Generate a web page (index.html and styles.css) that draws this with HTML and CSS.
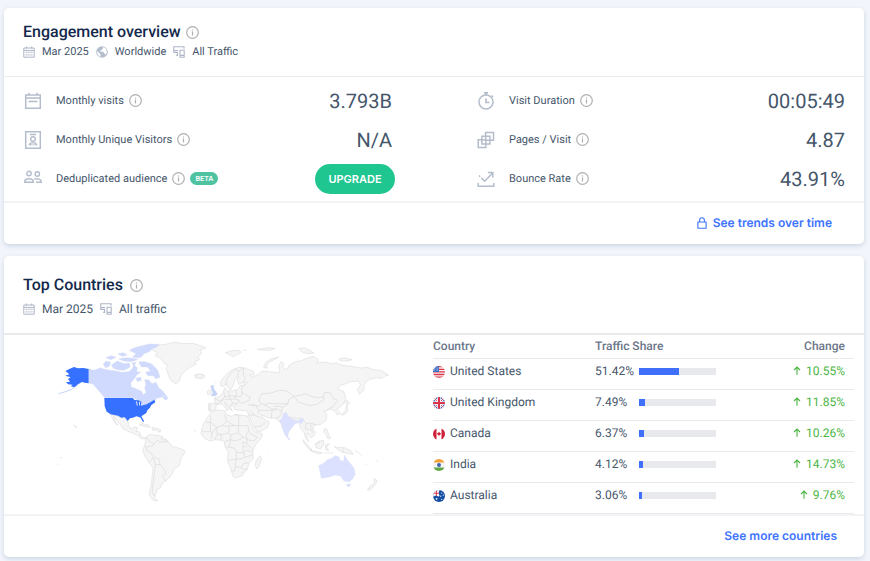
FILE: index.html
```html
<!DOCTYPE html>
<html lang="en">
<head>
<meta charset="utf-8">
<title>Engagement overview</title>
<link rel="stylesheet" href="styles.css">
</head>
<body>
<svg class="sprite" aria-hidden="true">
  <symbol id="info" viewBox="0 0 13 13"><circle cx="6.5" cy="6.5" r="5.8" fill="none" stroke="#b0b0b4" stroke-width="1.2"/><path d="M6.5 5.6v3.9M6.5 3.4v1.2" stroke="#b0b0b4" stroke-width="1.2"/></symbol>
  <symbol id="cal" viewBox="0 0 12 12"><path d="M.8 2h10.4v9.200H.8zM.8 4.400h10.400M3.300 .5v2M8.700 .5v2" fill="none" stroke="#adb6c6" stroke-width="1"/><path d="M2.600 6.400h7M2.600 8.800h7" stroke="#adb6c6" stroke-width="1.200" stroke-dasharray="1.200 .7"/></symbol>
  <symbol id="globe" viewBox="0 0 12 12"><circle cx="6" cy="6" r="5.8" fill="#b4bdcc"/><path d="M1.1 5.1 4.6 8.6v2.2C2.3 10.300 .8 7.500 1.100 5.100zM7 1.200v1.200L5.700 3.300v1.200H4.300v1.300h3.400v1.700h1.200l.8 1.400c1.600-1.900 1.600-5.500-.8-7.100z" fill="#fff"/></symbol>
  <symbol id="devices" viewBox="0 0 12 12"><path d="M11 2.800V.8H.8V6.400H5M3.200 9.400H5M4.500 6.400v3M.8 4.500H5M7 4.300h4.200v7H7zM7 9.400h4.200" fill="none" stroke="#adb6c6" stroke-width="1.100"/></symbol>
  <symbol id="visits" viewBox="0 0 18 18"><path d="M1.700 3h14.600v13.300H1.700zM1.700 6h14.600M5 .8v2.200M13 .8v2.200M4.500 9.500h9" fill="none" stroke="#b4bdcc" stroke-width="1.500"/></symbol>
  <symbol id="person" viewBox="0 0 18 18"><path d="M1.700 .8h14.600v16.400H1.700zM6 3.500h6" fill="none" stroke="#b4bdcc" stroke-width="1.500"/><circle cx="9" cy="8" r="2.300" fill="none" stroke="#b4bdcc" stroke-width="1.400"/><path d="M4.500 14.300c.3-2.600 2-3 4.500-3s4.200.4 4.500 3z" fill="#b4bdcc"/><path d="M7 13h4" stroke="#fff"/></symbol>
  <symbol id="people" viewBox="0 0 18 18"><g fill="none" stroke="#b4bdcc" stroke-width="1.400"><circle cx="5" cy="3.500" r="2.200"/><circle cx="13.300" cy="4" r="2.200"/><path d="M.6 12.300c0-2.500 1.700-3.600 4.400-3.600s4.400 1.100 4.400 3.600zM10.200 9.200c3.500-1 7.200-.1 7.200 3.100H12"/></g></symbol>
  <symbol id="timer" viewBox="0 0 18 18"><circle cx="9" cy="10" r="7" fill="none" stroke="#b4bdcc" stroke-width="1.500"/><path d="M7 .9h4M9 1v2M14.500 3.500l1.500 1.500M9 6.500v4h3.500" fill="none" stroke="#b4bdcc" stroke-width="1.700"/></symbol>
  <symbol id="pages" viewBox="0 0 18 18"><path d="M1.200 8.800h7.600v7.600H1.200zM4.900 5.200h8v7.800h-8zM8.600 1.500h7.900v7.800H8.600z" fill="none" stroke="#b4bdcc" stroke-width="1.500"/></symbol>
  <symbol id="bounce" viewBox="0 0 18 18"><path d="M1.200 13v3.300h15.600V13M2 5.500l1.200 1.200M4.400 7.900l3.300 3.300 7.600-8M10.800 2.500h5v5" fill="none" stroke="#b4bdcc" stroke-width="1.500"/></symbol>
  <symbol id="up" viewBox="0 0 8 9"><path d="M4 8.800V1M1 4l3-3 3 3" fill="none" stroke="#4bb543" stroke-width="1.100"/></symbol>
  <clipPath id="disc"><circle cx="6" cy="6" r="6"/></clipPath>
</svg>

<main class="page">
  <section class="card">
    <header class="card-head">
      <h2 class="title">Engagement overview <svg class="info"><use href="#info"/></svg></h2>
      <p class="meta small"><svg><use href="#cal"/></svg><span>Mar 2025</span><svg><use href="#globe"/></svg><span>Worldwide</span><svg><use href="#devices"/></svg><span>All Traffic</span></p>
    </header>
    <div class="metrics">
      <div class="metric"><svg class="icon"><use href="#visits"/></svg><span>Monthly visits</span><svg class="info"><use href="#info"/></svg><strong class="value">3.793B</strong></div>
      <div class="metric"><svg class="icon"><use href="#timer"/></svg><span>Visit Duration</span><svg class="info"><use href="#info"/></svg><strong class="value">00:05:49</strong></div>
      <div class="metric"><svg class="icon"><use href="#person"/></svg><span>Monthly Unique Visitors</span><svg class="info"><use href="#info"/></svg><strong class="value">N/A</strong></div>
      <div class="metric"><svg class="icon"><use href="#pages"/></svg><span>Pages / Visit</span><svg class="info"><use href="#info"/></svg><strong class="value">4.87</strong></div>
      <div class="metric"><svg class="icon"><use href="#people"/></svg><span>Deduplicated audience</span><svg class="info"><use href="#info"/></svg><span class="beta">BETA</span><button class="upgrade" type="button">UPGRADE</button></div>
      <div class="metric"><svg class="icon"><use href="#bounce"/></svg><span>Bounce Rate</span><svg class="info"><use href="#info"/></svg><strong class="value">43.91%</strong></div>
    </div>
    <footer class="card-foot wide">
      <a class="link" href="#trends"><svg class="lock" viewBox="0 0 10 12"><path d="M.9 5h8.200v6.200H.9zM2.600 5V3.200C2.600 0 7.400 0 7.400 3.200V5" fill="none" stroke="#3e74fe" stroke-width="1.100"/></svg>See trends over time</a>
    </footer>
  </section>

  <section class="card">
    <header class="card-head tall">
      <h2 class="title spaced">Top Countries <svg class="info"><use href="#info"/></svg></h2>
      <p class="meta"><svg><use href="#cal"/></svg><span>Mar 2025</span><svg><use href="#devices"/></svg><span>All traffic</span></p>
    </header>
    <div class="countries">
      <svg class="map" viewBox="0 0 1080 525" role="img" aria-label="World map">
        <g class="land">
          <path d="M332 42 342 36 360 30 378 28 400 22 430 26 460 25 498 38 480 46 484 56 474 66 478 74 465 80 468 88 455 94 440 103 432 112 424 118 418 138 408 146 396 140 388 128 382 110 378 98 384 90 372 84 362 70 346 62 352 52z"/>
          <path d="M463 121 475 118 490 119 494 124 484 130 468 129z"/>
          <path d="M212 238 225 241 240 247 252 250 264 258 266 275 276 282 282 276 292 278 288 288 300 292 302 303 314 309 322 306 318 312 304 311 294 302 280 295 262 288 248 280 240 268 230 256 221 244 226 262 234 270 228 268 219 254z"/>
          <path d="M298 270 310 266 325 272 332 277 318 275zM336 278 350 280 362 284 360 292 350 286 338 286z"/>
          <path d="M320 305 328 298 340 300 362 302 370 310 382 316 390 326 396 334 412 338 433 346 435 352 424 368 418 392 402 402 396 418 386 430 376 438 366 446 362 458 350 464 348 476 343 484 347 494 354 497 340 496 330 484 328 470 334 450 337 420 339 398 326 382 314 362 308 346 314 332z"/>
          <path d="M101 271l8 4 2 4zM88 315l3 1M60 368l6 1M53 388l4-1M461 285l5 3M322 266l4 4"/>
          <g transform="translate(420)">
            <path d="M122 152 122 140 130 128 142 115 158 104 176 97 190 98 206 103 220 108 222 119 208 120 214 127 234 119 246 108 268 110 290 113 300 110 296 92 304 80 312 86 308 98 320 105 328 90 346 80 364 77 378 71 400 64 416 75 410 84 436 81 454 86 470 84 486 91 512 94 540 99 562 97 580 104 604 107 626 120 612 124 606 130 590 128 572 132 558 140 552 150 552 165 538 178 532 164 542 150 534 138 512 140 492 148 478 152 474 164 490 168 497 186 491 206 478 218 470 222 482 236 472 240 463 226 450 222 440 228 432 228 440 238 438 256 422 268 407 270 396 280 407 292 400 304 392 308 382 294 380 302 386 320 376 308 372 292 364 284 356 262 345 264 325 290 322 308 314 296 303 265 295 256 286 250 262 248 244 238 250 250 268 262 262 278 240 290 230 288 216 264 205 240 203 228 180 226 164 224 160 210 150 213 157 228 148 222 146 212 134 202 144 220 142 228 130 210 120 206 108 210 108 222 98 230 85 226 86 206 105 206 103 190 117 184 130 172 134 158 142 168 160 167 176 162 180 152 194 150 204 142 190 142 176 148 172 136 176 122 164 136 160 152 152 164 144 158 140 146 130 154z"/>
            <path d="M82 168 90 164 95 170 92 178 82 178z"/>
            <path d="M45 121 58 117 74 122 70 129 52 129z"/>
            <path d="M136 53 152 48 176 45 184 52 172 58 160 65 148 58zM190 47 200 45M232 43 254 40 266 38 286 40 270 46 240 45zM356 42 372 38 390 46 402 54 384 56 368 52zM476 72 496 69 516 74 502 78 482 77zM250 96 258 82 272 72 296 66 286 72 270 80 260 90 262 100z"/>
            <path d="M95 228 115 225 135 227 138 238 156 244 166 238 202 243 210 262 224 290 246 296 246 306 226 330 218 350 220 370 207 384 202 402 186 422 166 429 159 424 152 400 142 378 145 352 135 335 133 320 124 316 106 314 90 318 76 312 63 296 67 276 76 256 88 240z"/>
            <path d="M228 378 240 362 245 370 238 394 230 402 226 392z"/>
            <path d="M368 314 382 328 396 345 388 344 374 328zM390 346 412 350 428 354 412 356zM405 328 418 318 430 316 432 326 422 342 408 338zM436 330 448 326 440 336 446 348 437 344zM434 280 442 284 446 300 452 308 444 312 438 298 432 292zM462 334 474 338 490 337 514 348 520 358 506 356 488 352 474 344zM524 346 540 356 546 362M556 386l4 4M588 376l6 3M434 354 460 354"/>
            <path d="M484 238 496 230 498 218 502 206 494 202 500 194 508 204 501 212 504 226 496 236 488 242z"/>
            <path d="M582 430 592 438 586 448 572 464 562 465 570 454 584 444zM42 286l5 3M265 356l3 2"/>
          </g>
        </g>
        <g class="borders">
          <path d="M320 305 328 320 344 326 352 316 362 322 384 320M344 326 334 334 318 336 314 332M318 336 320 348 332 352 342 372 346 390 360 388 370 400 378 414 366 424 378 438M326 382 339 370 342 372M346 390 344 410 340 440 336 470 344 484M366 302 366 318M376 312 374 320M360 388 358 374 344 366"/>
          <g transform="translate(420)">
            <path d="M138 152 140 132 150 118 166 104 178 108 190 98M172 122 176 108M190 98 190 120 196 130 190 142 194 150 184 160 186 172 198 180 210 186 208 196 186 205M132 172 134 186 120 204M134 186 148 182 146 170M148 182 164 184 170 176 168 166M148 182 150 192 134 194M150 192 166 192 178 196 182 206M166 192 164 184 184 184 186 172M150 192 158 204 170 206 176 198M158 204 152 214M170 206 170 212M103 190 118 198 130 194M105 206 118 206M90 206 90 228"/>
            <path d="M238 190 246 176 274 174 298 166 320 168 342 184 326 194 324 206 300 206 280 206 264 204 254 210 238 202 238 190M342 184 364 180 380 176 392 184 416 188 430 186 432 194 410 208 388 212 356 202 342 184M430 186 434 172 452 174 460 190 474 196 464 206 456 218M324 206 308 216 304 230M214 208 236 214 242 208M204 210 226 210 236 226 234 238M236 226 254 226 276 226 274 250M276 226 292 222 306 230 298 246 286 250M254 210 276 222 292 222M210 226 220 238 244 250M205 240 222 240M222 276 240 274 256 262M308 218 300 214 282 214M310 236 326 246 350 250 366 250 378 266 392 264 407 270M360 258 366 266M378 266 376 282 392 284 400 294M392 264 392 276 402 284M442 224 456 216"/>
            <path d="M92 242 92 262 78 262M92 262 110 276 126 272 140 258 134 240M90 262 92 290 66 290M110 276 96 294 92 290M96 294 94 310M110 276 112 298 104 314M126 272 138 274 148 272 146 294 126 298 112 298M140 258 164 272 148 272M164 240 176 240 176 272 204 272M164 272 176 272 174 294 152 300 146 294M204 272 206 288 198 300 202 314 222 318 232 306 214 298 206 288M174 294 190 306 202 314 200 326 218 342M152 300 152 314 134 320M152 314 166 318 182 312 190 306M152 314 148 336 136 336M148 336 164 340 170 352 190 354 188 320 200 326M190 354 198 346 218 350M190 354 196 366 218 360M170 352 168 372 144 376M168 372 166 394 182 398 192 384 206 384M168 372 184 372 196 366M166 394 164 408 154 408M182 398 194 404 202 402M184 414 190 410M190 334 202 336M122 298 124 316"/>
            <path d="M488 340 490 352M420 320 410 328"/>
          </g>
        </g>
        <g class="mid">
          <path d="M147 102 162 106 180 99 200 104 226 108 246 112 266 110 276 102 282 90 292 98 290 110 302 112 290 120 284 130 272 144 274 156 290 162 304 168 310 180 318 172 314 158 318 150 314 134 326 134 336 146 348 142 356 158 366 166 376 178 366 186 350 190 346 196 328 206 304 212 302 200 280 188 194 188 184 176 170 160 160 148 147 145z"/>
          <path d="M268 46 284 38 306 32 330 27 358 28 350 36 336 42 328 50 312 56 304 66 290 69 278 66 288 56zM190 88 198 78 212 82 208 94 196 98zM214 90 232 78 252 86 268 84 270 96 252 106 232 104 220 100zM198 68 214 62 228 67 212 74zM234 56 250 53 262 60 246 64zM236 72 256 68 280 70 294 74 272 80 250 78zM296 80 314 80 334 86 352 104 360 126 348 132 340 122 324 122 316 112 332 108 322 96 304 96zM288 130 302 126 304 136 292 140zM368 188 376 178 384 190 378 196zM276 84 288 82 282 94z"/>
        </g>
        <g class="hot">
          <path d="M76 108 88 102 102 96 114 100 130 99 146 102 146 145 134 143 126 141 114 148 104 157 92 154 98 149 84 148 78 142 90 140 84 132 92 127 76 122 88 118z"/>
          <path d="M105 155 94 164 76 170 56 176" fill="none" stroke="#a9bdef" stroke-width="2"/>
          <path d="M193 189 278 189 284 195 296 196 304 200 303 212 320 208 332 201 343 194 346 202 334 210 330 218 322 226 319 234 304 244 312 258 309 262 302 248 290 244 278 248 270 250 263 258 254 247 244 248 234 242 212 238 200 230 194 214z"/>
          <path d="M289 199 292 212M298 200 299 211" stroke="#dfe6ff" stroke-width="3"/>
        </g>
        <path fill="#c4d4f6" stroke="#c4cede" d="M512 153 521 150 521 161 528 170 532 178 526 183 513 182 519 174 515 164zM524 141l4 3"/>
        <g class="pale" transform="translate(420)">
          <path d="M310 236 318 232 326 246 340 254 352 258 368 250 372 254 364 266 356 262 345 266 334 280 325 292 322 308 314 296 307 278 304 266 298 258 306 250zM325 306 330 312 326 316z"/>
          <path d="M416 392 432 384 442 374 456 370 464 362 478 366 478 374 490 380 494 360 502 376 512 386 522 400 526 416 518 432 508 440 492 438 482 424 466 420 448 426 424 430 420 412zM500 447 512 447 508 456 502 454z"/>
        </g>
      </svg>
      <table class="table">
        <thead><tr><th scope="col">Country</th><th scope="col">Traffic Share</th><th scope="col" class="num">Change</th></tr></thead>
        <tbody>
          <tr>
            <td><div class="cell"><svg class="flag" viewBox="0 0 12 12"><g clip-path="url(#disc)"><path fill="#f4f4f6" d="M0 0h12v12H0z"/><path stroke="#dd3748" stroke-width="1.300" d="M0 .7h12M0 3.300h12M0 5.900h12M0 8.500h12M0 11.200h12"/><path fill="#3c6fc4" d="M0 0h6v6H0z"/><path stroke="#fff" stroke-width=".7" stroke-dasharray=".8 .8" d="M1 2h5M1 4h5"/></g></svg>United States</div></td>
            <td><div class="cell"><span class="pct">51.42%</span><span class="bar"><span class="fill" style="width:52%"></span></span></div></td>
            <td class="num"><svg class="up"><use href="#up"/></svg>10.55%</td>
          </tr>
          <tr>
            <td><div class="cell"><svg class="flag" viewBox="0 0 12 12"><g clip-path="url(#disc)"><path fill="#3e5ca8" d="M0 0h12v12H0z"/><path stroke="#fff" stroke-width="2" d="M0 0l12 12M12 0 0 12"/><path stroke="#d9334a" stroke-width=".8" d="M0 0l12 12M12 0 0 12"/><path stroke="#fff" stroke-width="3.600" d="M6 0v12M0 6h12"/><path stroke="#d9334a" stroke-width="2" d="M6 0v12M0 6h12"/></g></svg>United Kingdom</div></td>
            <td><div class="cell"><span class="pct">7.49%</span><span class="bar"><span class="fill" style="width:8%"></span></span></div></td>
            <td class="num"><svg class="up"><use href="#up"/></svg>11.85%</td>
          </tr>
          <tr>
            <td><div class="cell"><svg class="flag" viewBox="0 0 12 12"><g clip-path="url(#disc)"><path fill="#fff" d="M0 0h12v12H0z"/><path fill="#d02037" d="M0 0h3.500v12H0zM8.500 0H12v12H8.500zM6 3.600l.7 1.200 1.300.6-.8 1.600-1 .2V8.500h-.4V7.200l-1-.2L4 5.400l1.300-.6z"/></g></svg>Canada</div></td>
            <td><div class="cell"><span class="pct">6.37%</span><span class="bar"><span class="fill" style="width:7%"></span></span></div></td>
            <td class="num"><svg class="up"><use href="#up"/></svg>10.26%</td>
          </tr>
          <tr>
            <td><div class="cell"><svg class="flag" viewBox="0 0 12 12"><g clip-path="url(#disc)"><path fill="#f7f7f7" d="M0 0h12v12H0z"/><path fill="#f5a23b" d="M0 0h12v3.600H0z"/><path fill="#64a746" d="M0 8.400h12V12H0z"/><circle cx="6" cy="6" r="2" fill="#3e68ae"/></g></svg>India</div></td>
            <td><div class="cell"><span class="pct">4.12%</span><span class="bar"><span class="fill" style="width:5%"></span></span></div></td>
            <td class="num"><svg class="up"><use href="#up"/></svg>14.73%</td>
          </tr>
          <tr>
            <td><div class="cell"><svg class="flag" viewBox="0 0 12 12"><g clip-path="url(#disc)"><path fill="#164fa3" d="M0 0h12v12H0z"/><path stroke="#fff" stroke-width="2" d="M0 0l6 6M6 0 0 6M3.400 0v6M0 3.200h6"/><path stroke="#dc3348" stroke-width="1" d="M3.400 0v6M0 3.200h6"/><g fill="#fff"><circle cx="3.600" cy="8.800" r=".9"/><circle cx="8.600" cy="3" r=".6"/><circle cx="10.300" cy="5.200" r=".6"/><circle cx="7.700" cy="6.200" r=".6"/><circle cx="8.800" cy="9.300" r=".6"/></g></g></svg>Australia</div></td>
            <td><div class="cell"><span class="pct">3.06%</span><span class="bar"><span class="fill" style="width:4%"></span></span></div></td>
            <td class="num"><svg class="up"><use href="#up"/></svg>9.76%</td>
          </tr>
        </tbody>
      </table>
    </div>
    <footer class="card-foot">
      <a class="link" href="#countries">See more countries</a>
    </footer>
  </section>
</main>
</body>
</html>
```
FILE: styles.css
```css
* { box-sizing: border-box; }

body {
  margin: 0;
  background: #f2f5fb;
  color: #45566b;
  font: 12px/20px Roboto, "Liberation Sans", sans-serif;
  text-rendering: geometricPrecision;
}

svg { display: block; flex: none; }
.sprite { position: absolute; width: 0; height: 0; }

.page {
  display: grid;
  gap: 12px;
  padding: 8px 6px 4px 4px;
}

.card {
  background: #fff;
  border-radius: 5px;
  box-shadow: 0 2px 5px #cdd6e2;
}

.card-head {
  padding: 14px 19px;
  border-bottom: 1px solid #e9ebed;
}

.title {
  display: flex;
  align-items: center;
  gap: 5px;
  margin: 0;
  color: #14294b;
  font-size: 16px;
  font-weight: 500;
  line-height: 20px;
}

.title.spaced { gap: 7px; }
.info { width: 13px; height: 13px; }

.meta {
  display: flex;
  align-items: center;
  gap: 7px;
  margin: 0;
}

.meta svg { width: 12px; height: 12px; }
.small, .metric { font-size: 11px; }

.tall {
  padding: 17px 19px 12px;
  border-bottom: 2px solid #e9ebed;
}

.tall .title, .tall .meta { line-height: 24px; }

.metrics {
  display: grid;
  grid-template-columns: 1fr 1fr;
  column-gap: 82px;
  padding: 4px 16px 3px 20px;
}

.metric {
  display: flex;
  align-items: center;
  gap: 5px;
  height: 39px;
}

.icon { width: 18px; height: 18px; margin-right: 9px; }

.value {
  margin-left: auto;
  padding-right: 3px;
  font-size: 20px;
  font-weight: 400;
}

.beta {
  padding: 0 5px;
  border-radius: 7px;
  background: #4fc3a1;
  color: #fff;
  font: 600 7px/13px Inter, sans-serif;
}

.upgrade {
  width: 80px;
  height: 30px;
  margin-left: auto;
  padding: 0;
  border: 0;
  border-radius: 15px;
  background: #20c690;
  color: #fff;
  font: 600 11px/30px Inter, sans-serif;
}

.card-foot {
  display: flex;
  justify-content: flex-end;
  padding: 10px 27px 11px;
  border-top: 2px solid #f1f3f5;
}

.card-foot.wide { padding: 10px 32px 11px; }

.link {
  display: flex;
  align-items: center;
  gap: 6px;
  color: #3e74fe;
  font: 600 12px/20px Inter, sans-serif;
  text-decoration: none;
}

.lock { width: 10px; height: 12px; }

.countries {
  display: grid;
  grid-template-columns: 360fr 421fr;
  column-gap: 33px;
  align-items: start;
  padding: 0 10px 0 36px;
}

.map { width: 100%; }
.land { fill: #f5f5f5; stroke: #dedede; stroke-width: 2; }
.borders { fill: none; stroke: #dadada; stroke-width: 2; }
.mid { fill: #d0daff; stroke: #cfd6ee; stroke-width: 1; }
.hot { fill: #3670ff; }
.pale { fill: #dbe1ff; stroke: #d3daf6; stroke-width: 1; }

.table {
  width: 100%;
  border-collapse: separate;
  border-spacing: 0;
  table-layout: fixed;
}

.table th, .table td {
  padding: 0 0 5px;
  border-bottom: 1px solid #e8eaee;
  line-height: 25px;
  text-align: left;
}

.table th {
  padding: 0;
  color: #6b7789;
  font-weight: 500;
  line-height: 23px;
}

.table .num {
  padding-right: 9px;
  text-align: right;
}

.table td.num { color: #4bb543; }

.cell { display: flex; align-items: center; gap: 5px; }
.flag { width: 12px; height: 12px; }
.pct { width: 39px; }

.bar {
  width: 77px;
  height: 7px;
  background: #e8e9ed;
}

.fill {
  display: block;
  height: 100%;
  background: #4070fb;
}

.up {
  display: inline-block;
  width: 8px;
  height: 9px;
  margin-right: 5px;
}

.table th:first-child { width: 162px; }
.table th:last-child { width: 90px; }
```
